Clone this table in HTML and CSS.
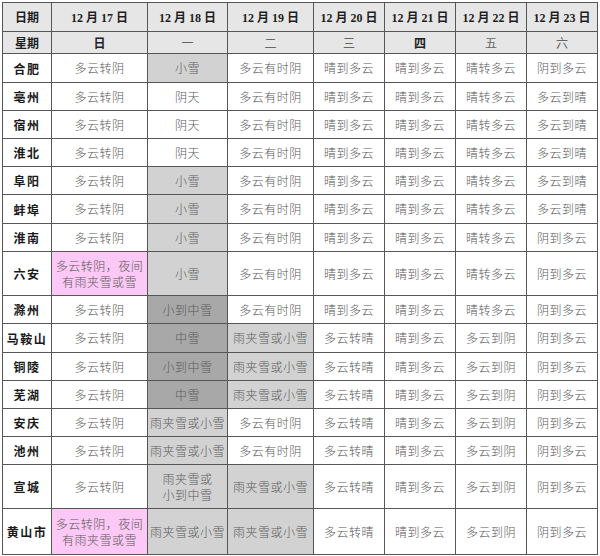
FILE: index.html
```html
<!DOCTYPE html>
<html lang="zh-CN">
<head>
<meta charset="utf-8">
<title>安徽天气预报</title>
<link rel="stylesheet" href="styles.css">
</head>
<body>
<table class="wx">
  <colgroup>
    <col class="c-city"><col class="c-17"><col class="c-18"><col class="c-19">
    <col class="c-d"><col class="c-d"><col class="c-d"><col class="c-d">
  </colgroup>
  <thead>
    <tr class="r-date">
      <th class="hd">日期</th>
      <th class="hd">12 月 17 日</th>
      <th class="hd">12 月 18 日</th>
      <th class="hd">12 月 19 日</th>
      <th class="hd">12 月 20 日</th>
      <th class="hd">12 月 21 日</th>
      <th class="hd">12 月 22 日</th>
      <th class="hd">12 月 23 日</th>
    </tr>
    <tr class="r-week">
      <th class="hd">星期</th>
      <th class="wk wk-b">日</th>
      <th class="wk">一</th>
      <th class="wk">二</th>
      <th class="wk">三</th>
      <th class="wk wk-b">四</th>
      <th class="wk">五</th>
      <th class="wk">六</th>
    </tr>
  </thead>
  <tbody>
    <tr class="r29"><th class="city">合肥</th><td>多云转阴</td><td class="lt">小雪</td><td>多云有时阴</td><td>晴到多云</td><td>晴到多云</td><td>晴转多云</td><td>阴到多云</td></tr>
    <tr><th class="city">亳州</th><td>多云转阴</td><td>阴天</td><td>多云有时阴</td><td>晴到多云</td><td>晴到多云</td><td>晴转多云</td><td>多云到晴</td></tr>
    <tr><th class="city">宿州</th><td>多云转阴</td><td>阴天</td><td>多云有时阴</td><td>晴到多云</td><td>晴到多云</td><td>晴转多云</td><td>多云到晴</td></tr>
    <tr><th class="city">淮北</th><td>多云转阴</td><td>阴天</td><td>多云有时阴</td><td>晴到多云</td><td>晴到多云</td><td>晴转多云</td><td>多云到晴</td></tr>
    <tr><th class="city">阜阳</th><td>多云转阴</td><td class="lt">小雪</td><td>多云有时阴</td><td>晴到多云</td><td>晴到多云</td><td>晴转多云</td><td>多云到晴</td></tr>
    <tr class="r29"><th class="city">蚌埠</th><td>多云转阴</td><td class="lt">小雪</td><td>多云有时阴</td><td>晴到多云</td><td>晴到多云</td><td>晴转多云</td><td>多云到晴</td></tr>
    <tr><th class="city">淮南</th><td>多云转阴</td><td class="lt">小雪</td><td>多云有时阴</td><td>晴到多云</td><td>晴到多云</td><td>晴转多云</td><td>阴到多云</td></tr>
    <tr class="tall"><th class="city">六安</th><td class="pk">多云转阴，夜间<br>有雨夹雪或雪</td><td class="lt">小雪</td><td>多云有时阴</td><td>晴到多云</td><td>晴到多云</td><td>晴转多云</td><td>阴到多云</td></tr>
    <tr><th class="city">滁州</th><td>多云转阴</td><td class="dk">小到中雪</td><td>多云有时阴</td><td>晴到多云</td><td>晴到多云</td><td>晴转多云</td><td>阴到多云</td></tr>
    <tr class="r29"><th class="city">马鞍山</th><td>多云转阴</td><td class="dk">中雪</td><td class="lt">雨夹雪或小雪</td><td>多云转晴</td><td>晴到多云</td><td>多云到阴</td><td>阴到多云</td></tr>
    <tr><th class="city">铜陵</th><td>多云转阴</td><td class="dk">小到中雪</td><td class="lt">雨夹雪或小雪</td><td>多云转晴</td><td>晴到多云</td><td>多云到阴</td><td>阴到多云</td></tr>
    <tr><th class="city">芜湖</th><td>多云转阴</td><td class="dk">中雪</td><td class="lt">雨夹雪或小雪</td><td>多云转晴</td><td>晴到多云</td><td>多云到阴</td><td>阴到多云</td></tr>
    <tr><th class="city">安庆</th><td>多云转阴</td><td class="lt">雨夹雪或小雪</td><td>多云有时阴</td><td>多云转晴</td><td>晴到多云</td><td>多云到阴</td><td>阴到多云</td></tr>
    <tr><th class="city">池州</th><td>多云转阴</td><td class="lt">雨夹雪或小雪</td><td>多云有时阴</td><td>多云转晴</td><td>晴到多云</td><td>多云到阴</td><td>阴到多云</td></tr>
    <tr class="tall"><th class="city">宣城</th><td>多云转阴</td><td class="lt">雨夹雪或<br>小到中雪</td><td class="lt">雨夹雪或小雪</td><td>多云转晴</td><td>晴到多云</td><td>多云到阴</td><td>阴到多云</td></tr>
    <tr class="tall last"><th class="city">黄山市</th><td class="pk">多云转阴，夜间<br>有雨夹雪或雪</td><td class="lt">雨夹雪或小雪</td><td class="lt">雨夹雪或小雪</td><td>多云转晴</td><td>晴到多云</td><td>多云到阴</td><td>阴到多云</td></tr>
  </tbody>
</table>
</body>
</html>
```

FILE: styles.css
```css
html, body {
  margin: 0;
  padding: 0;
  background: #ffffff;
}

body {
  padding: 2px 0 0 2px;
  font-family: "Liberation Serif", "Noto Sans CJK SC", serif;
}

.wx {
  border-collapse: collapse;
  table-layout: fixed;
  width: 596px;
}

.c-city { width: 49px; }
.c-17 { width: 96px; }
.c-18 { width: 80px; }
.c-19 { width: 86px; }
.c-d { width: 71px; }

.wx th,
.wx td {
  border: 1px solid #565656;
  padding: 0 1px;
  text-align: center;
  vertical-align: middle;
  white-space: nowrap;
  overflow: hidden;
}

.wx td {
  font-family: "Noto Sans CJK SC", sans-serif;
  font-weight: 300;
  font-size: 12px;
  letter-spacing: 0.5px;
  line-height: 16px;
  color: #5a5a5a;
}

.wx tr { height: 28px; }
.wx tr.r29 { height: 29px; }
.wx tr.r-date { height: 29px; }
.wx tr.r-week { height: 22px; }
.wx tr.tall { height: 44px; }
.wx tr.tall.last { height: 46px; }

.hd {
  background: #e6e6e6;
  font-size: 12px;
  font-weight: 700;
  color: #1e1e1e;
  letter-spacing: 0;
}

.wk {
  background: #e6e6e6;
  font-family: "Noto Sans CJK SC", sans-serif;
  font-size: 12px;
  font-weight: 400;
  color: #666666;
}

.wk-b {
  font-weight: 700;
  color: #222222;
}

.city {
  font-family: "Noto Sans CJK SC", sans-serif;
  font-size: 12px;
  font-weight: 700;
  letter-spacing: 1.5px;
  color: #1a1a1a;
}

.lt { background: #d2d2d2; }
.dk { background: #a8a8a8; }
.pk { background: #fcc8f5; }
```
